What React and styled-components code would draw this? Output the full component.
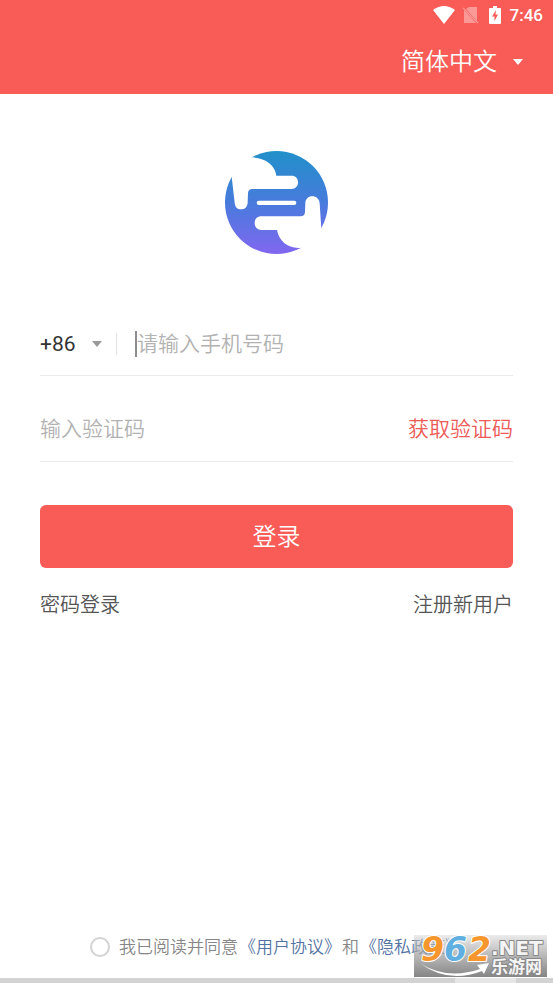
import React from 'react';
import styled, { createGlobalStyle } from 'styled-components';

const GlobalStyle = createGlobalStyle`
  * {
    box-sizing: border-box;
  }

  body {
    margin: 0;
    background: #fff;
    font-family: Roboto, 'Noto Sans CJK SC', sans-serif;
  }

  button,
  input,
  select {
    font-family: inherit;
  }
`;

const Page = styled.div`
  position: relative;
  display: flex;
  flex-direction: column;
  min-height: 100vh;
`;

const Header = styled.header`
  background: #f95b57;
  color: #fff;
`;

const StatusBar = styled.div`
  display: flex;
  align-items: center;
  justify-content: flex-end;
  height: 30px;
  padding-right: 10px;
`;

const StatusIcon = styled.svg`
  display: block;
  margin-right: ${(props) => props.$gap}px;
`;

const Clock = styled.span`
  font-size: 17px;
  line-height: 20px;
  font-weight: 500;
`;

const LanguageBar = styled.div`
  display: flex;
  justify-content: flex-end;
  height: 64px;
  padding-right: 30px;
`;

const Picker = styled.label`
  display: flex;
  align-items: center;
  gap: 16px;
  height: ${(props) => props.$height};
`;

const Select = styled.select`
  appearance: none;
  padding: 0;
  border: 0;
  background: transparent;
  color: ${(props) => props.$color};
  font-size: ${(props) => props.$size};
  font-weight: ${(props) => props.$weight || 400};
  line-height: 32px;
  outline: none;

  option {
    color: #333;
  }
`;

const Main = styled.main`
  display: flex;
  flex: 1;
  flex-direction: column;
  padding: 57px 40px 0;
`;

const Logo = styled.svg`
  display: block;
  align-self: center;
  width: 103px;
  height: 103px;
  margin-bottom: 56px;
`;

const Form = styled.form`
  display: flex;
  flex-direction: column;
`;

const Field = styled.div`
  display: flex;
  align-items: center;
  height: ${(props) => props.$height};
  padding-top: ${(props) => props.$top};
  border-bottom: 1px solid #ebebeb;
`;

const Divider = styled.span`
  width: 1px;
  height: 22px;
  margin: 0 18px 0 14px;
  background: #e2e2e2;
`;

const Input = styled.input`
  flex: 1;
  min-width: 0;
  height: 26px;
  padding: 0;
  border: 0;
  border-left: ${(props) => (props.$active ? '2px solid #8c8c8c' : '0')};
  background: transparent;
  color: #333;
  font-size: 21px;
  font-weight: 350;
  line-height: 26px;
  outline: none;

  &::placeholder {
    color: #b2b2b2;
    opacity: 1;
  }
`;

const CodeButton = styled.button`
  padding: 0;
  border: 0;
  background: none;
  color: #ec5b57;
  font-size: 21px;
  font-weight: 350;
  line-height: 26px;
`;

const LoginButton = styled.button`
  height: 63px;
  margin-top: 43px;
  padding: 0;
  border: 0;
  border-radius: 6px;
  background: #f95b57;
  color: #fff;
  font-size: 24px;
  font-weight: 350;
  line-height: 32px;
`;

const Links = styled.nav`
  display: flex;
  justify-content: space-between;
  margin-top: 21px;
`;

const TextLink = styled.a`
  color: #555;
  font-size: 20px;
  font-weight: 350;
  line-height: 32px;
  text-decoration: none;
`;

const Agreement = styled.footer`
  display: flex;
  align-items: center;
  gap: 1px;
  height: 32px;
  margin-bottom: 15px;
  padding-left: 90px;
  color: #868686;
  font-size: 17px;
  font-weight: 350;
  line-height: 24px;
  white-space: nowrap;
`;

const Checkbox = styled.input`
  appearance: none;
  flex: none;
  width: 20px;
  height: 20px;
  margin: 0 8px 0 0;
  border: 2px solid #d2d2d2;
  border-radius: 50%;
`;

const PolicyLink = styled.a`
  color: #5573a2;
  text-decoration: none;
`;

const BottomBar = styled.div`
  display: flex;
  justify-content: flex-end;
  height: 5px;
  padding-right: 37px;
  background: #d3d3d3;
`;

const BottomThumb = styled.div`
  width: 61px;
  background: #e6e6e6;
`;

const Watermark = styled.div`
  position: absolute;
  right: 6px;
  bottom: 6px;
  width: 133px;
  height: 42px;
  background: linear-gradient(rgba(215, 215, 215, 0.5), #858585);
`;

const WatermarkArt = styled.svg`
  display: block;
  overflow: visible;
`;

const Arrow = ({ color }) => (
  <svg width="10" height="6" viewBox="0 0 10 6" aria-hidden="true">
    <path d="M0 0H10L5 6Z" fill={color} />
  </svg>
);

const StatusIcons = () => (
  <>
    <StatusIcon $gap={8} width="22" height="18" viewBox="0 0 22 18" aria-hidden="true">
      <path d="M0 4Q11 -4 22 4L11 18Z" fill="#fff" />
    </StatusIcon>
    <StatusIcon $gap={10} width="16" height="18" viewBox="0 0 16 18" aria-hidden="true">
      <path d="M6 1H14V15L3 3ZM1 4L13 17H1Z" fill="#fff" opacity="0.38" />
      <path d="M0 2L15 17" stroke="#fff" strokeWidth="1.2" opacity="0.4" />
    </StatusIcon>
    <StatusIcon $gap={9} width="12" height="18" viewBox="0 0 12 18" aria-hidden="true">
      <path d="M4 0H8V2H11Q12 2 12 3V17Q12 18 11 18H1Q0 18 0 17V3Q0 2 1 2H4Z" fill="#fff" />
      <path d="M7 4L3 10.5H5.5V15L9 8.5H6.5Z" fill="#f95b57" />
    </StatusIcon>
  </>
);

const BrandLogo = () => (
  <Logo viewBox="30 27 309 309" aria-hidden="true">
    <defs>
      <linearGradient id="brand" x1="0" y1="0" x2="0" y2="1">
        <stop offset="0" stopColor="#2190c9" />
        <stop offset="0.5" stopColor="#477bdc" />
        <stop offset="1" stopColor="#8167f0" />
      </linearGradient>
    </defs>
    <circle cx="184.5" cy="181.5" r="154.5" fill="url(#brand)" />
    <g fill="#fff">
      <path d="M106 46C148 46 180 68 184 101H229C242 101 249 109 249 121S242 141 229 141H112Q100 141 99 153L98 182C97 195 89 202 78 202S60 195 59 182L50 104L30 90V27H106Z" />
      <path d="M319 260L314 184C313 171 304 163 292 163S271 171 271 184L270 211Q269 223 257 223H140C127 223 119 231 119 243S127 264 140 264H186C192 299 222 322 260 317V336H339V260Z" />
      <rect x="125" y="176" width="119" height="13" rx="6.5" />
    </g>
  </Logo>
);

const SiteMark = () => (
  <Watermark>
    <WatermarkArt width="133" height="42" viewBox="0 0 133 42">
      <g
        fontFamily="'DejaVu Sans', sans-serif"
        fontWeight="700"
        fontStyle="italic"
        fontSize="33"
        stroke="#fff"
        strokeWidth="2"
        strokeLinejoin="round"
        paintOrder="stroke"
      >
        <text x="7" y="26" fill="#f7962d">9</text>
        <text x="30" y="26" fill="#5fb0e0">6</text>
        <text x="54" y="26" fill="#f7962d">2</text>
      </g>
      <path d="M7 29Q34 45 66 34L63 30L75 28L70 39L68 36Q35 49 7 29Z" fill="#fff" />
      <g fill="#f4f4f4" stroke="#888" strokeWidth="2" strokeLinejoin="round" paintOrder="stroke">
        <text x="77" y="20" fontFamily="'DejaVu Sans', sans-serif" fontWeight="700" fontSize="20">
          .NET
        </text>
        <text x="77" y="38" fontFamily="'Noto Sans CJK SC', sans-serif" fontWeight="700" fontSize="17">
          乐游网
        </text>
      </g>
    </WatermarkArt>
  </Watermark>
);

const App = () => {
  return (
    <Page>
      <GlobalStyle />
      <Header>
        <StatusBar>
          <StatusIcons />
          <Clock>7:46</Clock>
        </StatusBar>
        <LanguageBar>
          <Picker $height="64px">
            <Select $size="24px" $color="#fff" $weight={350} aria-label="简体中文">
              <option>简体中文</option>
            </Select>
            <Arrow color="#fff" />
          </Picker>
        </LanguageBar>
      </Header>

      <Main>
        <BrandLogo />
        <Form onSubmit={(e) => e.preventDefault()}>
          <Field $height="66px" $top="2px">
            <Picker $height="32px">
              <Select $size="21px" $color="#333" aria-label="+86">
                <option>+86</option>
              </Select>
              <Arrow color="#999" />
            </Picker>
            <Divider />
            <Input $active type="tel" placeholder="请输入手机号码" aria-label="请输入手机号码" />
          </Field>
          <Field $height="86px" $top="20px">
            <Input type="text" placeholder="输入验证码" aria-label="输入验证码" />
            <CodeButton type="button">获取验证码</CodeButton>
          </Field>
          <LoginButton type="submit">登录</LoginButton>
        </Form>
        <Links>
          <TextLink href="#password">密码登录</TextLink>
          <TextLink href="#register">注册新用户</TextLink>
        </Links>
      </Main>

      <Agreement>
        <Checkbox id="agree" type="checkbox" />
        <label htmlFor="agree">我已阅读并同意</label>
        <PolicyLink href="#terms">《用户协议》</PolicyLink>
        <span>和</span>
        <PolicyLink href="#privacy">《隐私政策》</PolicyLink>
      </Agreement>
      <BottomBar>
        <BottomThumb />
      </BottomBar>
      <SiteMark />
    </Page>
  );
};

export default App;
